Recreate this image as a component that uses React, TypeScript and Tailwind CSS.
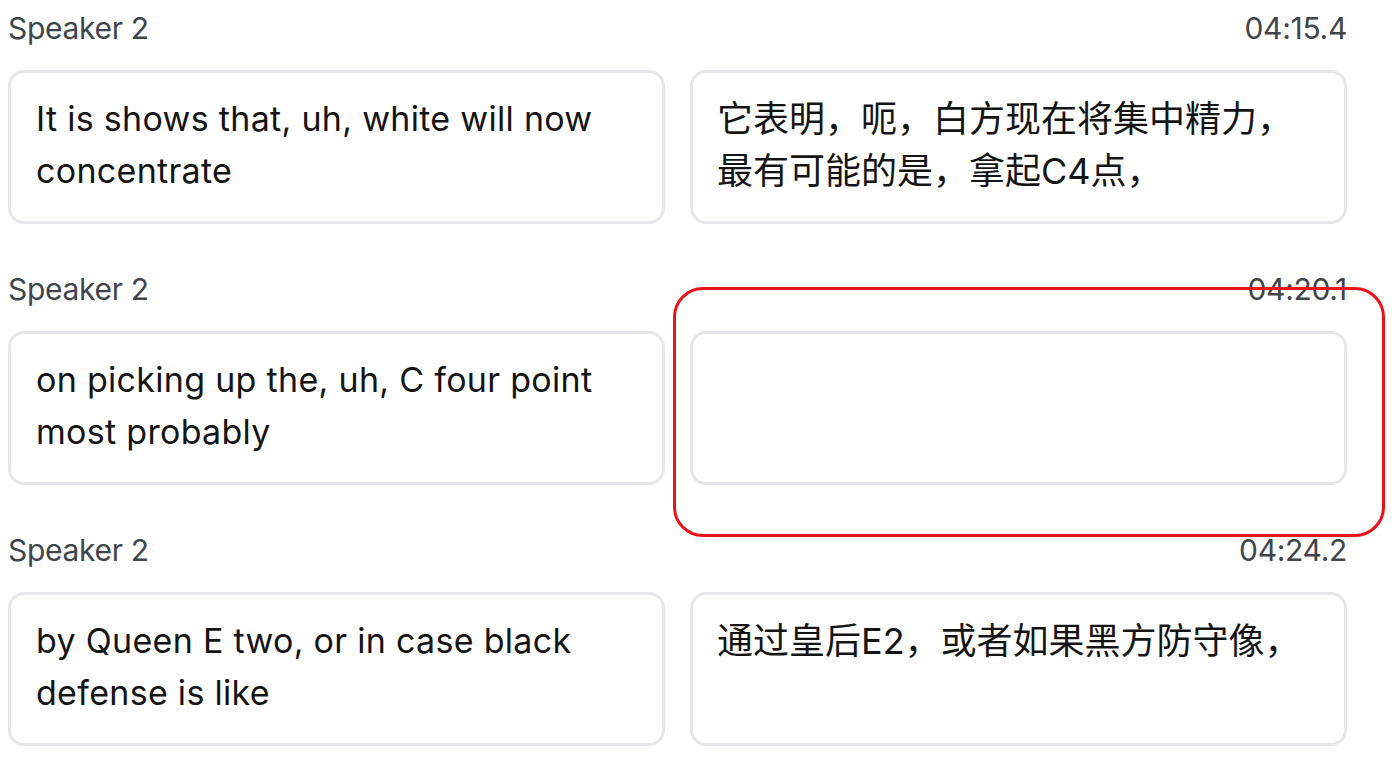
type Segment = {
  speaker: string;
  time: string;
  source: string;
  target: string;
};

const SEGMENTS: Segment[] = [
  {
    speaker: "Speaker 2",
    time: "04:15.4",
    source: "It is shows that, uh, white will now concentrate",
    target: "它表明，呃，白方现在将集中精力，最有可能的是，拿起C4点，",
  },
  {
    speaker: "Speaker 2",
    time: "04:20.1",
    source: "on picking up the, uh, C four point most probably",
    target: "",
  },
  {
    speaker: "Speaker 2",
    time: "04:24.2",
    source: "by Queen E two, or in case black defense is like",
    target: "通过皇后E2，或者如果黑方防守像，",
  },
];

const FONT = "font-['Inter','Noto_Sans_CJK_SC','Noto_Sans',sans-serif]";

function SegmentRow({ seg }: { seg: Segment }) {
  return (
    <div className="flex flex-col">
      <div className="flex h-[36px] items-center justify-between text-[30px] leading-[36px] tracking-[-0.3px] text-[#40454c]">
        <span>{seg.speaker}</span>
        <span>{seg.time}</span>
      </div>
      <div className="mt-[24px] grid grid-cols-2 gap-[25px]">
        <div className="rounded-[16px] border-[3px] border-[#e6e7ea] bg-white pl-[25px] pr-[20px] pt-[20px] pb-[24px] text-[34px] leading-[52px] tracking-[0.3px] text-[#141414]">
          {seg.source}
        </div>
        <div className="min-h-[154px] rounded-[16px] border-[3px] border-[#e6e7ea] bg-white pl-[24px] pr-[20px] pt-[20px] pb-[24px] text-[36px] leading-[52px] text-[#141414]">
          {seg.target}
        </div>
      </div>
    </div>
  );
}

export default function App() {
  return (
    <div className={`relative h-[782px] w-[1400px] overflow-hidden bg-white ${FONT}`}>
      <div className="ml-[8px] flex w-[1339px] flex-col gap-[47px] pt-[10px]">
        {SEGMENTS.map((seg) => (
          <SegmentRow key={seg.time} seg={seg} />
        ))}
      </div>
      {/* highlight around the missing translation */}
      <div className="pointer-events-none absolute left-[673px] top-[287px] h-[250px] w-[712px] rounded-[30px] border-[3px] border-[#e8141a]" />
    </div>
  );
}
